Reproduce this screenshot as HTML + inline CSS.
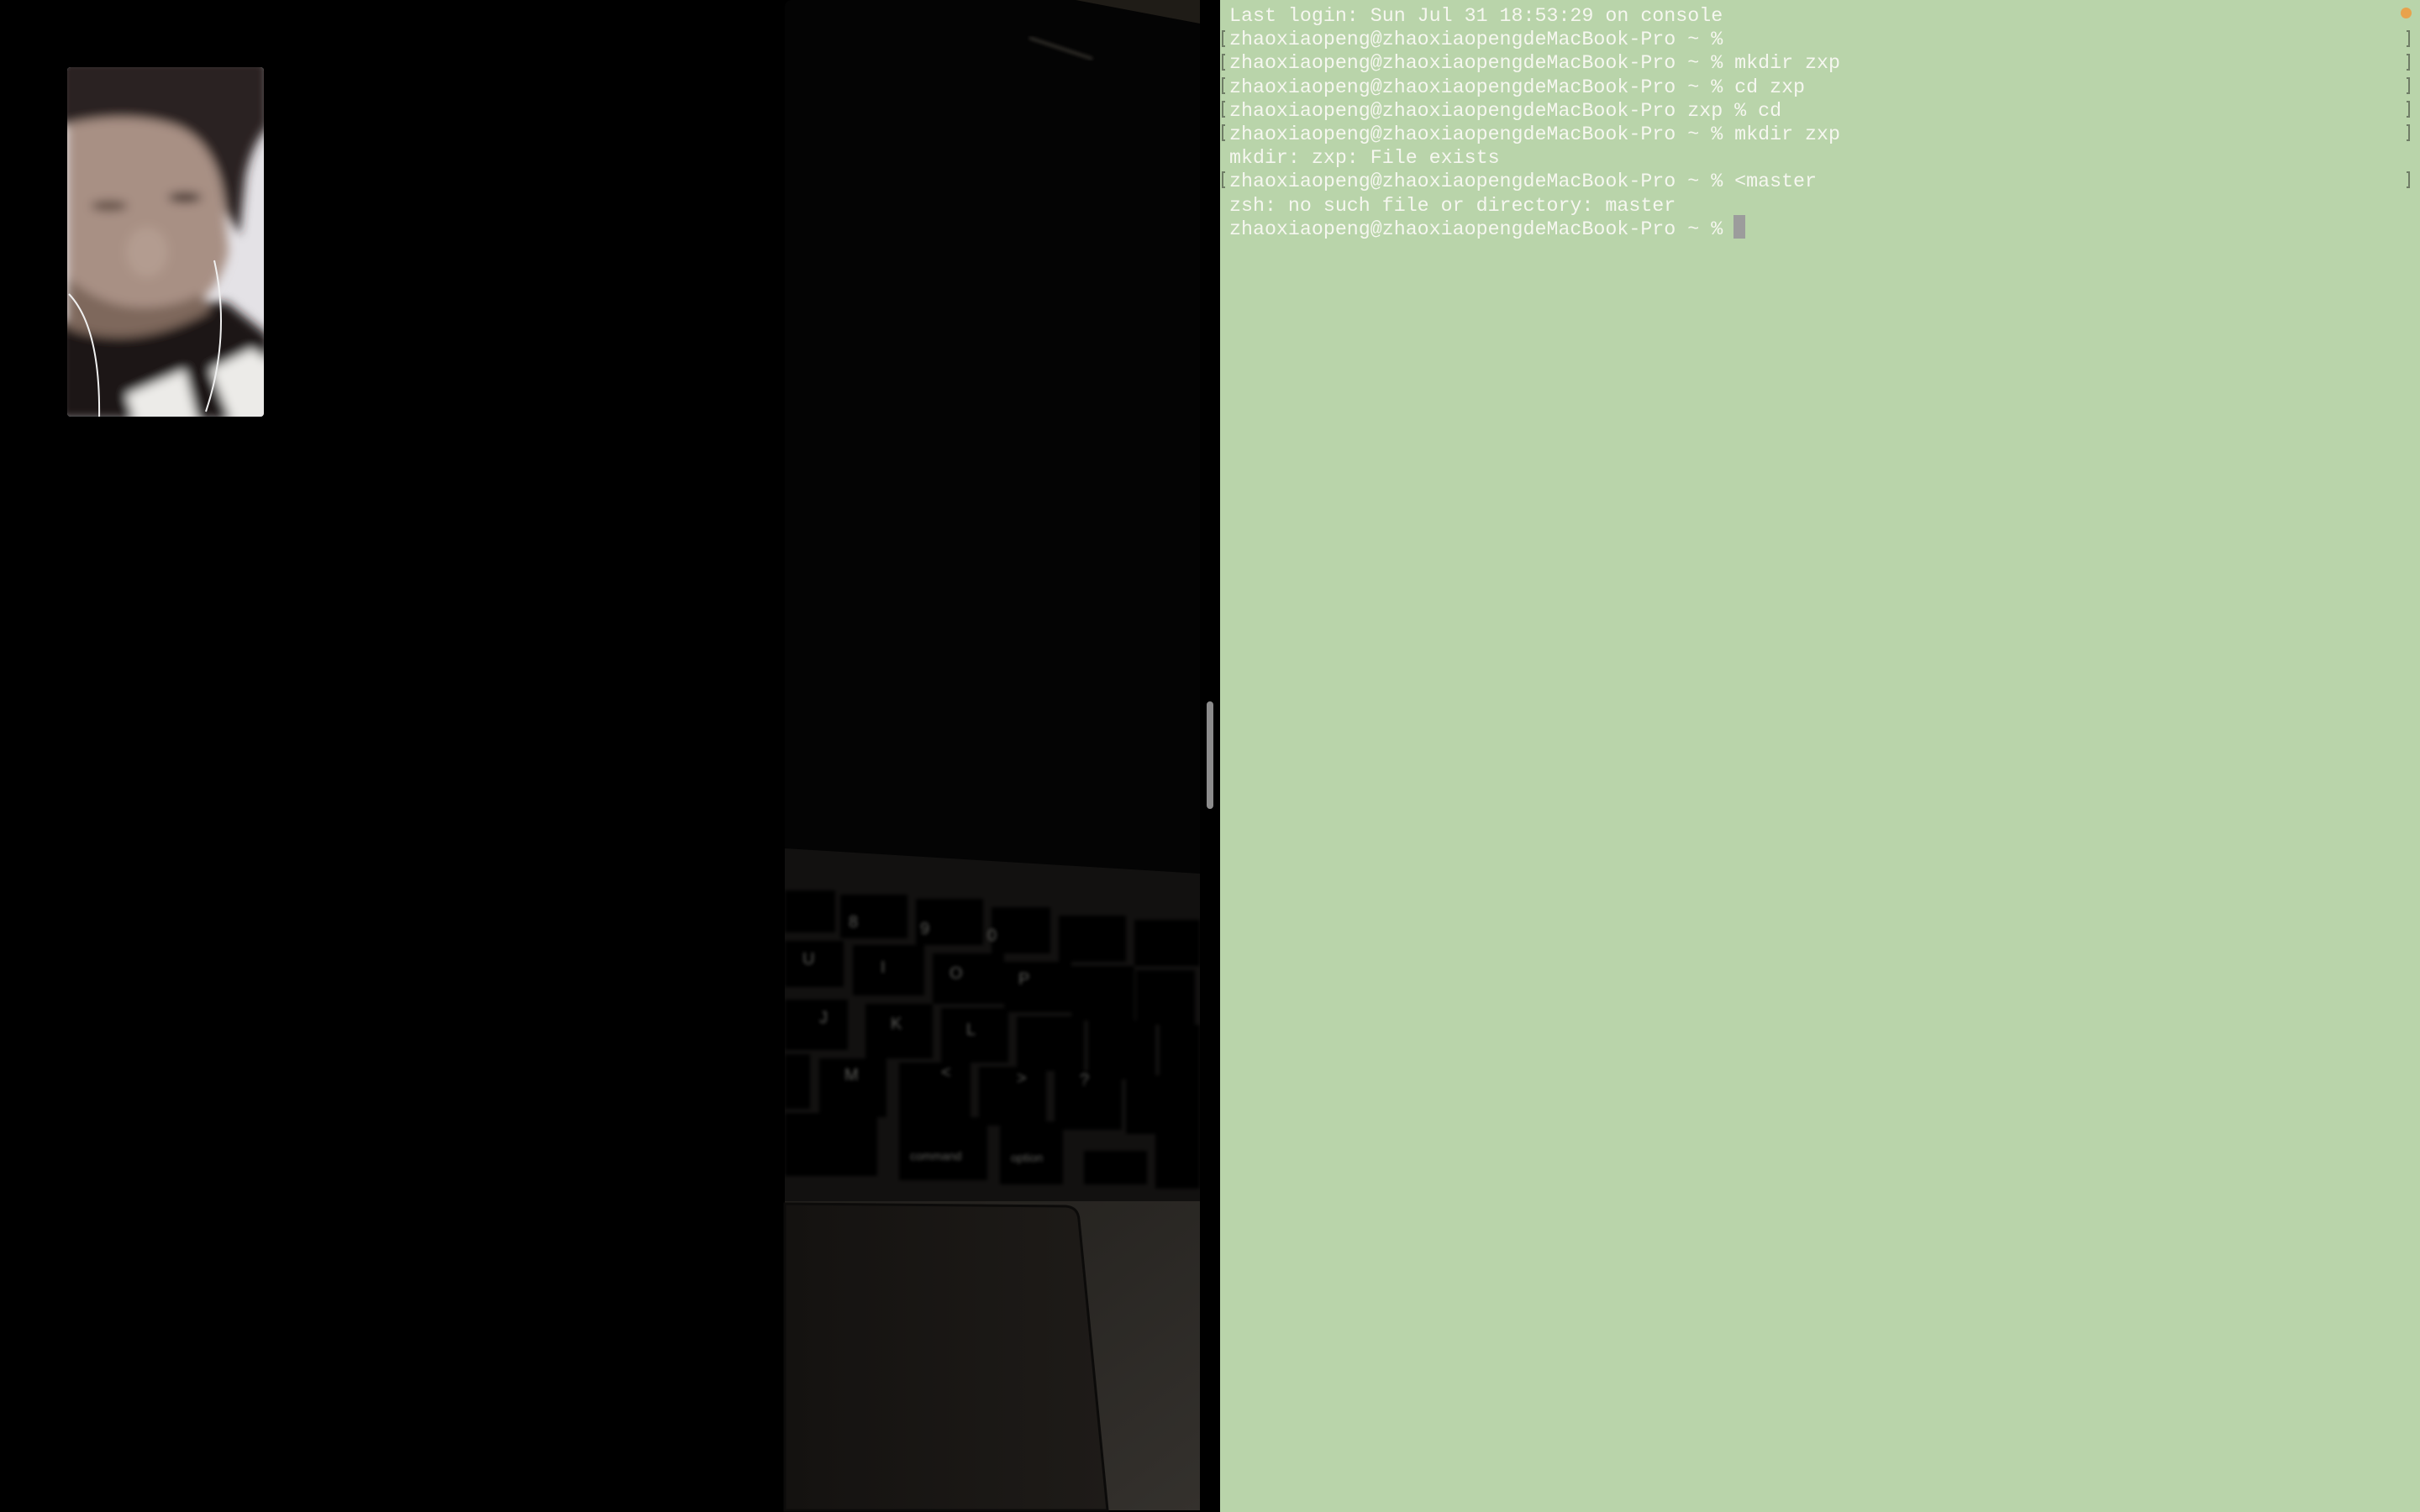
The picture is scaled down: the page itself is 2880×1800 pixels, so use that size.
<!DOCTYPE html>
<html><head><meta charset="utf-8"><style>
html,body{margin:0;padding:0;width:2880px;height:1800px;overflow:hidden;background:#000;}
.term{position:absolute;left:1452px;top:0;width:1428px;height:1800px;background:#b9d4aa;}
.txt{position:absolute;left:11px;top:5px;font-family:"Liberation Mono",monospace;font-size:23.3px;line-height:28.2px;color:#f6f7f0;white-space:pre;}
.br{position:absolute;left:1454px;width:4px;height:20px;border:2px solid #6f7d66;border-right:none;box-sizing:border-box;}
.br2{position:absolute;left:2864px;width:4px;height:20px;border:2px solid #6f7d66;border-left:none;box-sizing:border-box;}
</style></head><body>
<svg width="2880" height="1800" style="position:absolute;left:0;top:0">
<defs>
<linearGradient id="tg" x1="0" y1="0" x2="1" y2="0"><stop offset="0" stop-color="#141210"/><stop offset="1" stop-color="#1e1b18"/></linearGradient>
<linearGradient id="rg" x1="0" y1="0" x2="1" y2="1"><stop offset="0" stop-color="#201e1b"/><stop offset="1" stop-color="#34312d"/></linearGradient>
<filter id="bl"><feGaussianBlur stdDeviation="2"/></filter>
<filter id="bl6"><feGaussianBlur stdDeviation="6"/></filter>
</defs>
<rect x="934" y="0" width="494" height="1798" fill="#040404" rx="8"/>
<polygon points="1280,0 1428,0 1428,28" fill="#1f1c17"/>
<line x1="1225" y1="45" x2="1300" y2="70" stroke="#3a3833" stroke-width="3" filter="url(#bl)"/>
<polygon points="934,1010 1428,1040 1428,1440 934,1430" fill="#121110"/>
<g fill="#050505" filter="url(#bl)">
<rect x="934" y="1060" width="60" height="50"/><rect x="1000" y="1065" width="80" height="52"/><rect x="1090" y="1070" width="80" height="55"/><rect x="1180" y="1080" width="70" height="55"/><rect x="1260" y="1090" width="80" height="55"/><rect x="1350" y="1095" width="78" height="55"/>
<rect x="934" y="1120" width="70" height="55"/><rect x="1015" y="1125" width="85" height="60"/><rect x="1110" y="1135" width="85" height="60"/><rect x="1195" y="1145" width="80" height="60"/><rect x="1275" y="1150" width="75" height="65"/><rect x="1352" y="1155" width="70" height="65"/>
<rect x="934" y="1190" width="75" height="60"/><rect x="1030" y="1195" width="80" height="65"/><rect x="1120" y="1200" width="80" height="65"/><rect x="1210" y="1210" width="80" height="65"/><rect x="1295" y="1215" width="80" height="70"/><rect x="1380" y="1220" width="48" height="70"/>
<rect x="934" y="1255" width="30" height="65"/><rect x="975" y="1260" width="80" height="70"/><rect x="1070" y="1265" width="85" height="70"/><rect x="1165" y="1270" width="80" height="70"/><rect x="1255" y="1275" width="80" height="70"/><rect x="1340" y="1280" width="88" height="70"/>
<rect x="934" y="1325" width="110" height="75"/><rect x="1070" y="1330" width="105" height="75"/><rect x="1190" y="1335" width="75" height="75"/><rect x="1290" y="1370" width="75" height="40"/><rect x="1375" y="1340" width="53" height="75"/>
</g>
<g fill="#6a6a66" font-family="Liberation Sans,sans-serif" font-size="20" filter="url(#bl)" opacity="0.9">
<text x="1010" y="1104">8</text><text x="1095" y="1112">9</text><text x="1175" y="1120">0</text>
<text x="955" y="1148">U</text><text x="1048" y="1158">I</text><text x="1130" y="1165">O</text><text x="1212" y="1172">P</text>
<text x="975" y="1218">J</text><text x="1060" y="1225">K</text><text x="1150" y="1232">L</text>
<text x="1005" y="1286">M</text><text x="1120" y="1283">&lt;</text><text x="1210" y="1290">&gt;</text><text x="1285" y="1292">?</text>
<text x="1083" y="1381" font-size="14">command</text><text x="1203" y="1383" font-size="14">option</text>
</g>
<rect x="934" y="1430" width="494" height="368" fill="url(#rg)"/>
<path d="M934,1433 L1268,1436 Q1283,1437 1284,1452 L1318,1798 L934,1798 Z" fill="url(#tg)" stroke="#0c0b0a" stroke-width="3"/>
<rect x="1436" y="835" width="8" height="128" rx="4" fill="#8b8b8b"/>
<clipPath id="th"><rect x="80" y="80" width="234" height="416" rx="4"/></clipPath>
<g clip-path="url(#th)">
<rect x="80" y="80" width="234" height="416" fill="#e4e2e6"/>
<g filter="url(#bl6)">
<path d="M80,120 Q140,110 200,130 Q250,160 265,230 L272,300 Q260,350 220,370 L175,390 Q120,400 80,380 Z" fill="#a89084"/>
<path d="M70,70 L320,70 L320,150 Q300,170 292,210 L285,280 L268,250 Q260,170 210,150 Q150,130 70,150 Z" fill="#2a2220"/>
<path d="M70,380 Q150,420 230,360 L270,360 L320,400 L320,500 L70,500 Z" fill="#1f1819"/>
<path d="M80,330 Q150,390 240,350 L250,370 Q160,420 80,390 Z" fill="#7e685c"/>
<polygon points="150,470 220,440 235,500 160,500" fill="#ecebe8"/>
<polygon points="250,440 300,415 320,430 320,500 275,500" fill="#ecebe8"/>
<ellipse cx="130" cy="245" rx="22" ry="6" fill="#5a463e"/><ellipse cx="220" cy="235" rx="20" ry="6" fill="#3a2c28"/>
<ellipse cx="175" cy="300" rx="25" ry="30" fill="#b39c90"/>
</g>
<path d="M82,350 Q120,390 118,500" stroke="#f0f0f0" stroke-width="2" fill="none"/>
<path d="M255,310 Q275,400 245,490" stroke="#f0f0f0" stroke-width="2" fill="none"/>
</g>
</svg>
<div class="term">
<div class="txt">Last login: Sun Jul 31 18:53:29 on console
zhaoxiaopeng@zhaoxiaopengdeMacBook-Pro ~ %
zhaoxiaopeng@zhaoxiaopengdeMacBook-Pro ~ % mkdir zxp
zhaoxiaopeng@zhaoxiaopengdeMacBook-Pro ~ % cd zxp
zhaoxiaopeng@zhaoxiaopengdeMacBook-Pro zxp % cd
zhaoxiaopeng@zhaoxiaopengdeMacBook-Pro ~ % mkdir zxp
mkdir: zxp: File exists
zhaoxiaopeng@zhaoxiaopengdeMacBook-Pro ~ % &lt;master
zsh: no such file or directory: master
zhaoxiaopeng@zhaoxiaopengdeMacBook-Pro ~ % </div>
<div style="position:absolute;left:611px;top:256px;width:14px;height:28px;background:#9c9c9c"></div>
</div>
<div style="position:absolute;left:2857px;top:9px;width:13px;height:13px;border-radius:50%;background:#e8a24c"></div>
<div class="br" style="top:36px"></div><div class="br" style="top:64px"></div><div class="br" style="top:92px"></div><div class="br" style="top:120px"></div><div class="br" style="top:148px"></div><div class="br" style="top:204px"></div>
<div class="br2" style="top:36px"></div><div class="br2" style="top:64px"></div><div class="br2" style="top:92px"></div><div class="br2" style="top:120px"></div><div class="br2" style="top:148px"></div><div class="br2" style="top:204px"></div>
</body></html>
